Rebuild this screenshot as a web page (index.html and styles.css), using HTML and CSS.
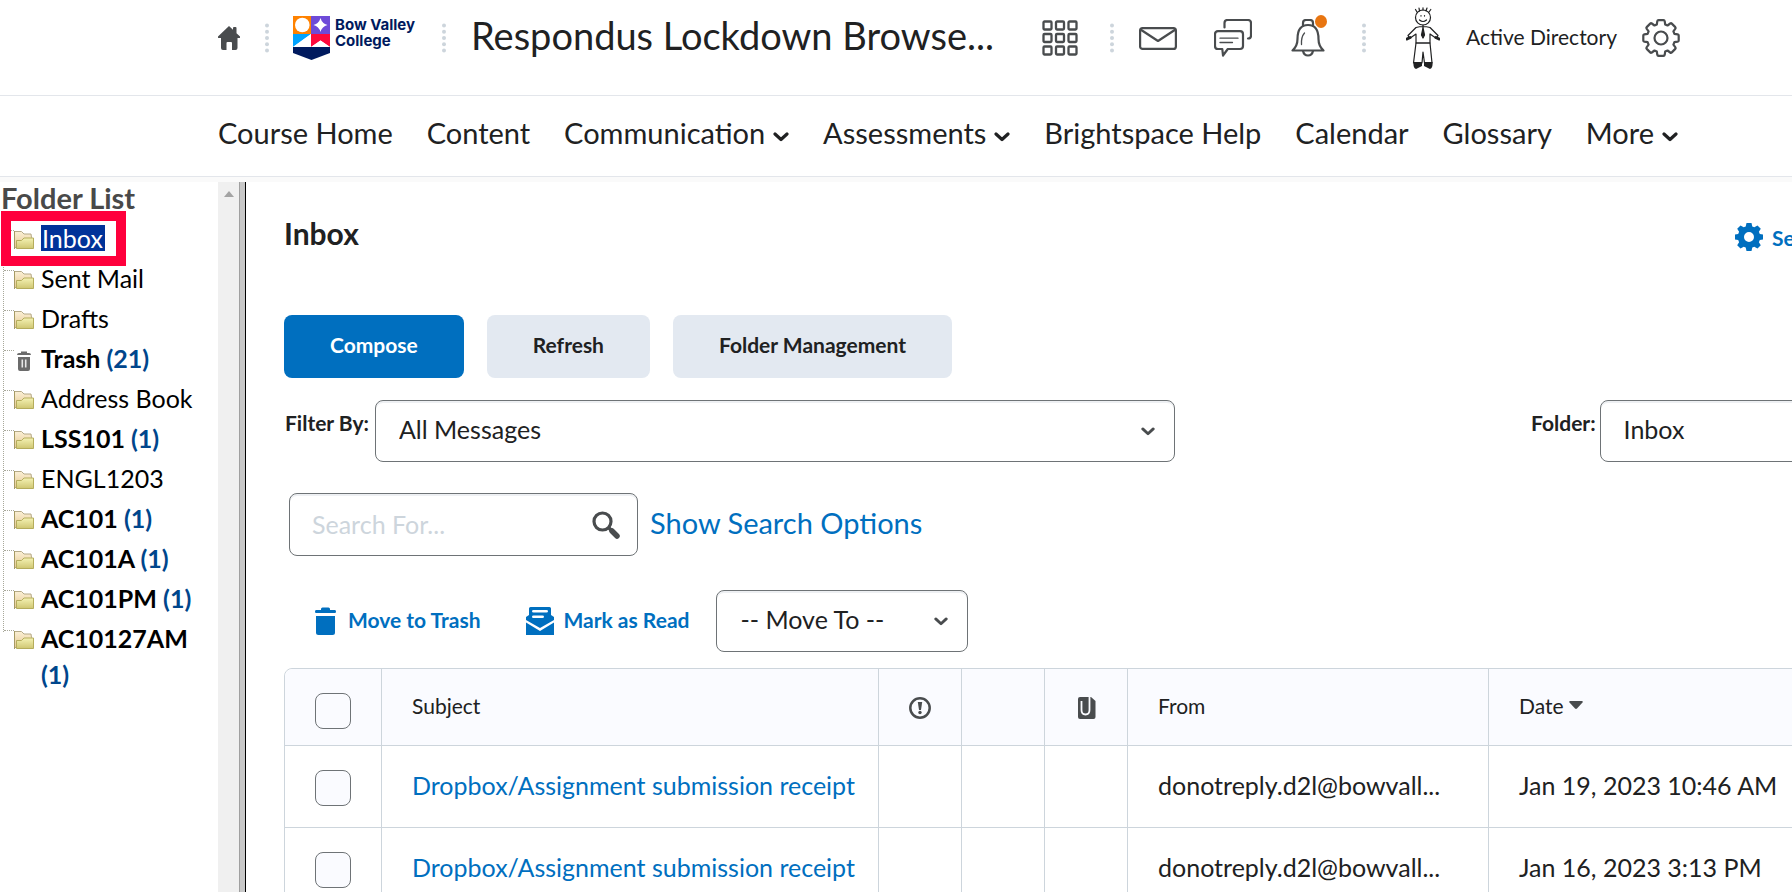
FILE: index.html
```html
<!DOCTYPE html>
<html lang="en">
<head>
<meta charset="utf-8">
<title>Inbox - Respondus Lockdown Browser</title>
<link rel="stylesheet" href="styles.css">
</head>
<body>
<svg class="defs" aria-hidden="true">
  <defs>
    <linearGradient id="fold-back" x1="0" y1="0" x2="0" y2="1"><stop offset="0" stop-color="#fbf0d6"/><stop offset="1" stop-color="#e6c890"/></linearGradient>
    <linearGradient id="fold-front" x1="0" y1="0" x2="0" y2="1"><stop offset="0" stop-color="#f4f2b4"/><stop offset="1" stop-color="#cfc672"/></linearGradient>
  </defs>
  <symbol id="folder" viewBox="0 0 20 18">
    <path d="M.5 16.500V.5h7l2.500 2.500h7l.5 3.500v10z" fill="url(#fold-back)" stroke="#b5a986"/>
    <path d="M2.500 17.500V9.500h5l2.500-2.500h9.500v10.500z" fill="url(#fold-front)" stroke="#b5ad5c"/>
    <path d="M.5 0v18" stroke="#a59a63"/>
  </symbol>
  <symbol id="chevron" viewBox="0 0 16 10"><path d="M2 2l6 5.500L14 2" fill="none" stroke="currentColor" stroke-width="3.200" stroke-linecap="round" stroke-linejoin="round"/></symbol>
  <symbol id="dots" viewBox="0 0 4 30"><g fill="#cdd5dc"><circle cx="2" cy="2.500" r="2"/><circle cx="2" cy="8.700" r="2"/><circle cx="2" cy="15" r="2"/><circle cx="2" cy="21.300" r="2"/><circle cx="2" cy="27.500" r="2"/></g></symbol>
</svg>

<header class="topbar">
  <a class="home" href="#" aria-label="My Home"><svg width="22" height="24" viewBox="0 0 22 24"><path d="M11 0l4 3.800V2q0-1 1-1h1.500q1 0 1 1v5.200L22 10.500q.6 1.500-1 1.500h-1.500v10q0 2-2 2h-3.500v-7q0-1-1-1h-3.500q-1 0-1 1v7H5q-2 0-2-2V12H1q-1.600 0-1-1.500z" fill="#494c4e"/></svg></a>
  <svg class="sep sep-home" width="4" height="30"><use href="#dots"/></svg>
  <a class="brand" href="#">
    <svg width="37" height="44" viewBox="0 0 37 44">
      <path d="M0 0h18v18H0z" fill="#ff8200"/><circle cx="9.300" cy="9" r="7.300" fill="#fff"/>
      <path d="M18 0h19v18H18z" fill="#6e4bd8"/><path d="M27.500 2q1.500 5.500 7 7-5.500 1.500-7 7-1.500-5.500-7-7 5.500-1.500 7-7z" fill="#fff"/>
      <path d="M0 18h18L0 31z" fill="#00a3ff"/><path d="M18 18v13H0z" fill="#fff"/>
      <path d="M18 18h19v13l-9.500-6.500L18 31z" fill="#ff0a3c"/><path d="M18 31l9.500-6.500L37 31z" fill="#fff"/>
      <path d="M0 31h37v6L18.500 44 0 37z" fill="#001a5e"/>
    </svg>
    <span class="brand-name">Bow Valley<br>College</span>
  </a>
  <svg class="sep sep-brand" width="4" height="30"><use href="#dots"/></svg>
  <a class="course" href="#">Respondus Lockdown Browse...</a>
  <button class="ico ico-grid" aria-label="Select a course"><svg width="36" height="36" viewBox="0 0 36 36"><g fill="none" stroke="#494c4e" stroke-width="2.300"><rect x="1.500" y="1.500" width="8" height="8" rx="1"/><rect x="14" y="1.500" width="8" height="8" rx="1"/><rect x="26.500" y="1.500" width="8" height="8" rx="1"/><rect x="1.500" y="14" width="8" height="8" rx="1"/><rect x="14" y="14" width="8" height="8" rx="1"/><rect x="26.500" y="14" width="8" height="8" rx="1"/><rect x="1.500" y="26.500" width="8" height="8" rx="1"/><rect x="14" y="26.500" width="8" height="8" rx="1"/><rect x="26.500" y="26.500" width="8" height="8" rx="1"/></g></svg></button>
  <svg class="sep sep-grid" width="4" height="30"><use href="#dots"/></svg>
  <button class="ico ico-mail" aria-label="Message alerts"><svg width="38" height="38" viewBox="0 0 38 38"><g fill="none" stroke="#494c4e" stroke-width="2.200" stroke-linejoin="round"><rect x="1.100" y="9.100" width="35.800" height="20.800" rx="2.500"/><path d="M1.500 10.500L19 22 36.500 10.500"/></g></svg></button>
  <button class="ico ico-chat" aria-label="Subscription alerts"><svg width="38" height="38" viewBox="0 0 38 38"><g fill="none" stroke="#494c4e" stroke-width="2.200" stroke-linecap="round" stroke-linejoin="round"><path d="M10.500 8.500V4q0-3 3-3H34q3 0 3 3v12.500q0 3-3 3"/><path d="M4 12.200h22q3 0 3 3V27q0 3-3 3H13.800L9 36.500 8.300 30H4q-3 0-3-3V15.200q0-3 3-3z"/><path d="M6 19.200h18M6 23.500h12.500" stroke-width="1.300"/></g></svg></button>
  <button class="ico ico-bell" aria-label="Update alerts"><svg width="38" height="38" viewBox="0 0 38 38"><g fill="none" stroke="#494c4e" stroke-width="2.200" stroke-linecap="round" stroke-linejoin="round"><path d="M12 7V4q0-3 3-3h4q3 0 3 3v3"/><path d="M1.500 31.500q5-4.500 5-11.500 0-14 10.500-14t10.500 14q0 7 5 11.500z"/><path d="M12 32q1 4.500 5 4.500t5-4.500"/><path d="M13.500 14q-3.500 4-3 11.500" stroke-width="1.300"/></g></svg><span class="badge"></span></button>
  <svg class="sep sep-bell" width="4" height="30"><use href="#dots"/></svg>
  <button class="profile"><svg width="34" height="62" viewBox="0 0 34 62"><g fill="none" stroke="#202122" stroke-width="1.200" stroke-linecap="round" stroke-linejoin="round"><circle cx="17" cy="10.500" r="7.500"/><path d="M11 5L9.500 2.500M13.500 4L13 1M17 3V.8M20 4l1-3M23 5l1.800-2.500M13.500 13q3.500 3 7 0"/><path d="M15 8.500v.6M18.500 8.500v.6M17 18v3M10 20.500q7-2 14 0l8 8-1.500 3-6.500-4.500V36H10v-9l-6.500 4.500L2 28.500z"/><path d="M17 21l-1.500 7 1.500 3 1.500-3z" fill="#202122"/><path d="M10 36L7.500 56M16 56l1-11 1.500 11M24 36l2 20M10 36h14"/><path d="M1 32l3-1.500M30 30.500l3 1.500" stroke-width="3"/></g><path d="M7.500 55h8.500v4l-6 3q-3-1-2.500-7zM18 55h8.500q.5 6-2.500 7l-6-3z" fill="#202122"/></svg><span>Active Directory</span></button>
  <button class="ico ico-gear" aria-label="Admin tools"><svg width="38" height="38" viewBox="0 0 38 38"><g fill="none" stroke="#494c4e" stroke-width="2.200" stroke-linejoin="round"><circle cx="19" cy="19" r="6.500"/><path d="M16.500 1.200h5q1 0 1.200 1l.5 3.300 2.300 1 2.700-2q.9-.6 1.600.1l3.500 3.500q.7.800.1 1.600l-2 2.700 1 2.400 3.300.5q1 .2 1 1.200v5q0 1-1 1.200l-3.300.5-1 2.400 2 2.700q.6.900-.1 1.600l-3.500 3.500q-.8.700-1.600.1l-2.700-2-2.300 1-.5 3.300q-.2 1-1.200 1h-5q-1 0-1.200-1l-.5-3.300-2.300-1-2.700 2q-.9.600-1.600-.1l-3.500-3.500q-.7-.8-.1-1.600l2-2.700-1-2.400-3.300-.5q-1-.2-1-1.200v-5q0-1 1-1.200l3.300-.5 1-2.400-2-2.700q-.6-.9.100-1.600l3.500-3.500q.8-.7 1.600-.1l2.700 2 2.300-1 .5-3.300q.2-1 1.200-1z"/></g></svg></button>
</header>

<nav class="nav">
  <a href="#">Course Home</a>
  <a href="#">Content</a>
  <button>Communication <svg width="16" height="10"><use href="#chevron"/></svg></button>
  <button>Assessments <svg width="16" height="10"><use href="#chevron"/></svg></button>
  <a href="#">Brightspace Help</a>
  <a href="#">Calendar</a>
  <a href="#">Glossary</a>
  <button>More <svg width="16" height="10"><use href="#chevron"/></svg></button>
</nav>

<div class="panes">
  <aside class="sidebar">
    <h2>Folder List</h2>
    <ul class="tree">
      <li class="current"><svg width="20" height="18"><use href="#folder"/></svg><a href="#"><span class="selected">Inbox</span></a></li>
      <li><svg width="20" height="18"><use href="#folder"/></svg><a href="#">Sent Mail</a></li>
      <li><svg width="20" height="18"><use href="#folder"/></svg><a href="#">Drafts</a></li>
      <li><svg width="20" height="20" viewBox="0 0 20 20"><path d="M3 4q0-2 2-2h2V.5h6V2h2q2 0 2 2zM4 6h12v12q0 2-2 2H6q-2 0-2-2z" fill="#6b6b6b"/><path d="M8.300 8.500v8M11.700 8.500v8" stroke="#e8e8e8" stroke-width="1.600"/></svg><a href="#"><b>Trash <i>(21)</i></b></a></li>
      <li><svg width="20" height="18"><use href="#folder"/></svg><a href="#">Address Book</a></li>
      <li><svg width="20" height="18"><use href="#folder"/></svg><a href="#"><b>LSS101 <i>(1)</i></b></a></li>
      <li><svg width="20" height="18"><use href="#folder"/></svg><a href="#">ENGL1203</a></li>
      <li><svg width="20" height="18"><use href="#folder"/></svg><a href="#"><b>AC101 <i>(1)</i></b></a></li>
      <li><svg width="20" height="18"><use href="#folder"/></svg><a href="#"><b>AC101A <i>(1)</i></b></a></li>
      <li><svg width="20" height="18"><use href="#folder"/></svg><a href="#"><b>AC101PM <i>(1)</i></b></a></li>
      <li><svg width="20" height="18"><use href="#folder"/></svg><a href="#"><b>AC10127AM <i>(1)</i></b></a></li>
    </ul>
  </aside>
  <div class="scrollbar"><svg width="10" height="6" viewBox="0 0 10 6"><path d="M0 6l5-6 5 6z" fill="#a3a3a3"/></svg></div>
  <div class="divider"></div>
  <main class="main">
    <div class="content">
      <div class="heading">
        <h1>Inbox</h1>
        <a class="action" href="#"><svg width="28" height="28" viewBox="0 0 28 28"><path fill="#006fbf" fill-rule="evenodd" d="M11.500 0h5l.8 3.400 2 .8L22.500 2.500l3.300 3.300-1.900 3 .9 2.200 3.200.6v4.800l-3.200.6-.9 2.200 1.900 3-3.300 3.300-3.200-1.700-2 .8-.8 3.400h-5l-.8-3.400-2-.8-3.200 1.700-3.300-3.300 1.900-3-.9-2.200L0 16.400v-4.800l3.200-.6.900-2.200-1.900-3 3.300-3.300 3.200 1.700 2-.8zM14 9a5 5 0 100 10 5 5 0 000-10z"/></svg>Settings</a>
      </div>
      <div class="buttons">
        <button class="btn primary">Compose</button>
        <button class="btn">Refresh</button>
        <button class="btn">Folder Management</button>
      </div>
      <div class="filters">
        <div class="field">
          <label for="filter">Filter By:</label>
          <div class="select wide"><select id="filter"><option>All Messages</option></select><svg width="14" height="9"><use href="#chevron"/></svg></div>
        </div>
        <div class="field">
          <label for="folder-select">Folder:</label>
          <div class="select"><select id="folder-select"><option>Inbox</option></select></div>
        </div>
      </div>
      <div class="search">
        <div class="search-box">
          <input type="text" placeholder="Search For..." aria-label="Search For">
          <button aria-label="Search"><svg width="28" height="28" viewBox="0 0 28 28"><circle cx="10.500" cy="10.500" r="8.500" fill="none" stroke="#494c4e" stroke-width="3.200"/><path d="M17 17l2.500 2.500" stroke="#494c4e" stroke-width="3.500"/><path d="M20 20l5 5" stroke="#494c4e" stroke-width="5.500" stroke-linecap="round"/></svg></button>
        </div>
        <a href="#">Show Search Options</a>
      </div>
      <div class="toolbar">
        <button class="action"><svg width="21" height="28" viewBox="0 0 21 28"><path fill="#006fbf" d="M6 3V2q0-1.500 1.500-1.500h6Q15 .5 15 2v1h5q1 0 1 1.500T20 6H1Q0 6 0 4.500T1 3zM1 9h19v16.500q0 2.500-2.500 2.500h-14Q1 28 1 25.500z"/></svg><span>Move to Trash</span></button>
        <button class="action"><svg width="28" height="28" viewBox="0 0 28 28"><path fill="#006fbf" fill-rule="evenodd" d="M3 1.500Q3 0 4.500 0h19Q25 0 25 1.500V8l3 2v3L14 21 0 13v-3l3-2zM7.500 3q-1.500 0-1.500 1.200t1.500 1.200h13q1.500 0 1.500-1.200T20.500 3zM7.500 8.500q-1.500 0-1.500 1.300T7.500 11h9q1.500 0 1.500-1.200t-1.500-1.300zM0 15.500L14 24l14-8.500V28H0z"/></svg><span>Mark as Read</span></button>
        <div class="select move"><select aria-label="Move To"><option>-- Move To --</option></select><svg width="14" height="9"><use href="#chevron"/></svg></div>
      </div>
      <table class="mail">
        <colgroup><col class="c-check"><col class="c-subject"><col class="c-flag"><col class="c-flag"><col class="c-flag"><col class="c-from"><col></colgroup>
        <thead>
          <tr>
            <th class="check"><input type="checkbox" aria-label="Select all"></th>
            <th>Subject</th>
            <th class="icon"><svg width="22" height="22" viewBox="0 0 22 22"><circle cx="11" cy="11" r="9.700" fill="none" stroke="#494c4e" stroke-width="2.500"/><path d="M8.800 5h4.400l-1.200 8h-2z" fill="#494c4e"/><circle cx="11" cy="15.500" r="1.700" fill="#494c4e"/></svg></th>
            <th></th>
            <th class="icon"><svg width="22" height="22" viewBox="-3 0 22 22"><path d="M2 0h11l4.500 4V20q0 2-2 2H2q-2 0-2-2V2q0-2 2-2z" fill="#494c4e"/><path d="M3.500 4v9q0 4.500 4 4.500t4-4.500V0" fill="none" stroke="#fafbff" stroke-width="1.800"/></svg></th>
            <th>From</th>
            <th><span class="sort">Date<svg width="14" height="8" viewBox="0 0 14 8"><path d="M1 0h12q1.200.5.500 1.500L8 7.500q-1 .8-2 0L.5 1.500Q-.2.5 1 0z" fill="#494c4e"/></svg></span></th>
          </tr>
        </thead>
        <tbody>
          <tr><td class="check"><input type="checkbox" aria-label="Select message from Jan 19"></td><td><a href="#">Dropbox/Assignment submission receipt</a></td><td></td><td></td><td></td><td>donotreply.d2l@bowvall...</td><td>Jan 19, 2023 10:46 AM</td></tr>
          <tr><td class="check"><input type="checkbox" aria-label="Select message from Jan 16"></td><td><a href="#">Dropbox/Assignment submission receipt</a></td><td></td><td></td><td></td><td>donotreply.d2l@bowvall...</td><td>Jan 16, 2023 3:13 PM</td></tr>
        </tbody>
      </table>
    </div>
  </main>
</div>
</body>
</html>
```
FILE: styles.css
```css
*, *::before, *::after { box-sizing: border-box; }
body { margin: 0; height: 100vh; display: flex; flex-direction: column; overflow: hidden; background: #fff; color: #202122; font-family: Lato, "Liberation Sans", sans-serif; font-size: 25px; }
a { color: inherit; text-decoration: none; }
button { padding: 0; border: 0; background: none; color: inherit; font: inherit; cursor: pointer; }
svg { display: block; flex: none; }
.defs { position: absolute; width: 0; height: 0; }

.topbar { display: flex; align-items: center; flex: none; height: 96px; padding: 0 112px 19px 218px; border-bottom: 1px solid #e3e6eb; }
.ico { position: relative; flex: none; }
.sep-home { margin-left: 25px; margin-right: 24px; }
.sep-brand { margin-left: 24px; margin-right: 25px; }
.sep-grid { margin-left: 32px; }
.sep-bell { margin-left: 33px; }
.brand { display: flex; gap: 5px; width: 125px; }
.brand-name { font: 700 15px/16px Inter, sans-serif; color: #001a5e; white-space: nowrap; padding-top: 1px; }
.course { flex: 1; padding-bottom: 6px; font-size: 38px; line-height: 48px; white-space: nowrap; overflow: hidden; }
.ico-mail { margin-left: 25px; }
.ico-chat { margin-left: 37px; }
.ico-bell { margin-left: 39px; }
.badge { position: absolute; top: -4px; left: 24px; width: 12px; height: 13px; border-radius: 50%; background: #e87511; }
.profile { display: flex; align-items: center; gap: 26px; margin-left: 40px; font-size: 21px; white-space: nowrap; }
.profile span { padding-bottom: 4px; }
.ico-gear { margin-left: 25px; }

.nav { display: flex; align-items: center; justify-content: space-between; flex: none; height: 86px; padding: 0 114px 13px 218px; background: linear-gradient(#fff, #fff) 0 0 / 100% 80px no-repeat, linear-gradient(#e3e6eb, #e3e6eb) 0 80px / 100% 1px no-repeat #fafafa; font-size: 29px; white-space: nowrap; }
.nav button { display: flex; align-items: center; gap: 8px; }
.nav svg { margin-top: 8px; }

.panes { display: flex; flex: 1; min-height: 0; }
.sidebar { flex: none; width: 218px; overflow: hidden; color: #000; }
.sidebar h2 { margin: 0; padding-left: 1px; font-size: 29px; line-height: 32px; color: #494949; }
.tree { position: relative; margin: 4px 0 0; padding: 0; list-style: none; line-height: 36px; }
.tree::before { content: ""; position: absolute; left: 3px; top: 12px; height: 402px; border-left: 1px dotted #a8a89a; }
.tree li { position: relative; display: flex; align-items: flex-start; gap: 7px; padding: 2px 20px 2px 14px; }
.tree li::before { content: ""; position: absolute; left: 4px; top: 12px; width: 10px; border-top: 1px dotted #a8a89a; }
.tree li > svg { margin-top: 11px; }
.tree i { font-style: normal; color: #00468c; }
.tree .current::after { content: ""; position: absolute; left: 1px; top: -7px; width: 125px; height: 55px; border: 10px solid #ff003c; }
.selected { display: inline-block; padding: 0 2px 0 1px; line-height: 26px; background: #039; color: #fff; }
.scrollbar { flex: none; width: 21px; padding: 9px 6px; background: #f0f0f0; }
.divider { flex: none; width: 7px; background: #c8c8c8; border-left: 1px solid #a0a0a0; border-right: 1px solid #000; }

.main { flex: 1; min-width: 0; overflow: hidden; }
.content { margin-left: 38px; margin-right: -64px; }
.heading { display: flex; align-items: flex-start; justify-content: space-between; padding-top: 33px; height: 133px; }
h1 { margin: 0; font-size: 30px; line-height: 36px; }
.action { display: flex; align-items: center; gap: 9px; color: #006fbf; font-size: 21px; font-weight: 700; white-space: nowrap; }
.heading .action { padding-top: 8px; width: 121px; }
.buttons { display: flex; gap: 23px; }
.btn { height: 63px; padding: 0 46px 5px; border-radius: 8px; background: #e3e9f1; font-size: 21px; font-weight: 700; }
.primary { background: #006fbf; color: #fff; }
.filters { display: flex; justify-content: space-between; margin-top: 22px; }
.field { display: flex; gap: 6px; }
.field:last-child { gap: 4px; width: 326px; }
.field label { padding: 10px 0 0 1px; font-size: 21px; line-height: 26px; font-weight: 700; white-space: nowrap; }
.select { position: relative; flex: 1; }
.wide { flex: none; width: 800px; }
.select select, .search-box { width: 100%; height: 62px; border: 1px solid #6e7376; border-radius: 8px; background: #fff; box-shadow: inset 0 2px 0 #eef0f3; }
.select select { display: block; padding: 0 23px 4px; appearance: none; color: inherit; font: inherit; }
.select svg { position: absolute; right: 20px; top: 27px; color: #494c4e; }
.search { display: flex; align-items: center; gap: 12px; margin: 31px 0 0 5px; font-size: 29px; color: #006fbf; }
.search > a { padding-bottom: 4px; }
.search-box { display: flex; align-items: center; width: 349px; height: 63px; padding: 0 17px 0 22px; }
.search-box input { flex: 1; min-width: 0; padding: 0 0 2px; border: 0; background: none; font: inherit; font-size: 25px; }
.search-box input::placeholder { color: #cdd5dc; opacity: 1; }
.toolbar { display: flex; align-items: center; margin: 34px 0 16px 31px; }
.toolbar .action { gap: 12px; }
.toolbar .action span { padding-bottom: 4px; }
.toolbar .action + .action { gap: 9px; margin-left: 46px; }
.move { flex: none; width: 252px; margin-left: 27px; }

.mail { width: 100%; table-layout: fixed; border-collapse: separate; border-spacing: 0; border: 1px solid #cdd5dc; border-radius: 8px 8px 0 0; }
.c-check { width: 96px; }
.c-subject { width: 497px; }
.c-flag { width: 83px; }
.c-from { width: 361px; }
th, td { padding: 0 0 4px 30px; border-left: 1px solid #cdd5dc; text-align: left; white-space: nowrap; }
th:first-child, td:first-child { border-left: 0; }
th { height: 76px; background: #fafbff; font-size: 21px; font-weight: 400; }
th:first-child { border-radius: 8px 0 0; }
td { height: 82px; border-top: 1px solid #cdd5dc; }
td a { color: #006fbf; }
.check, .icon { padding-bottom: 0; }
.check input { display: block; width: 36px; height: 36px; margin: 8px 0 0; border: 1px solid #6e7376; border-radius: 8px; background: #fafbff; appearance: none; }
td.check input { margin-top: 2px; }
.icon svg { margin-top: 2px; }
.sort { display: flex; align-items: center; gap: 5px; }
```
